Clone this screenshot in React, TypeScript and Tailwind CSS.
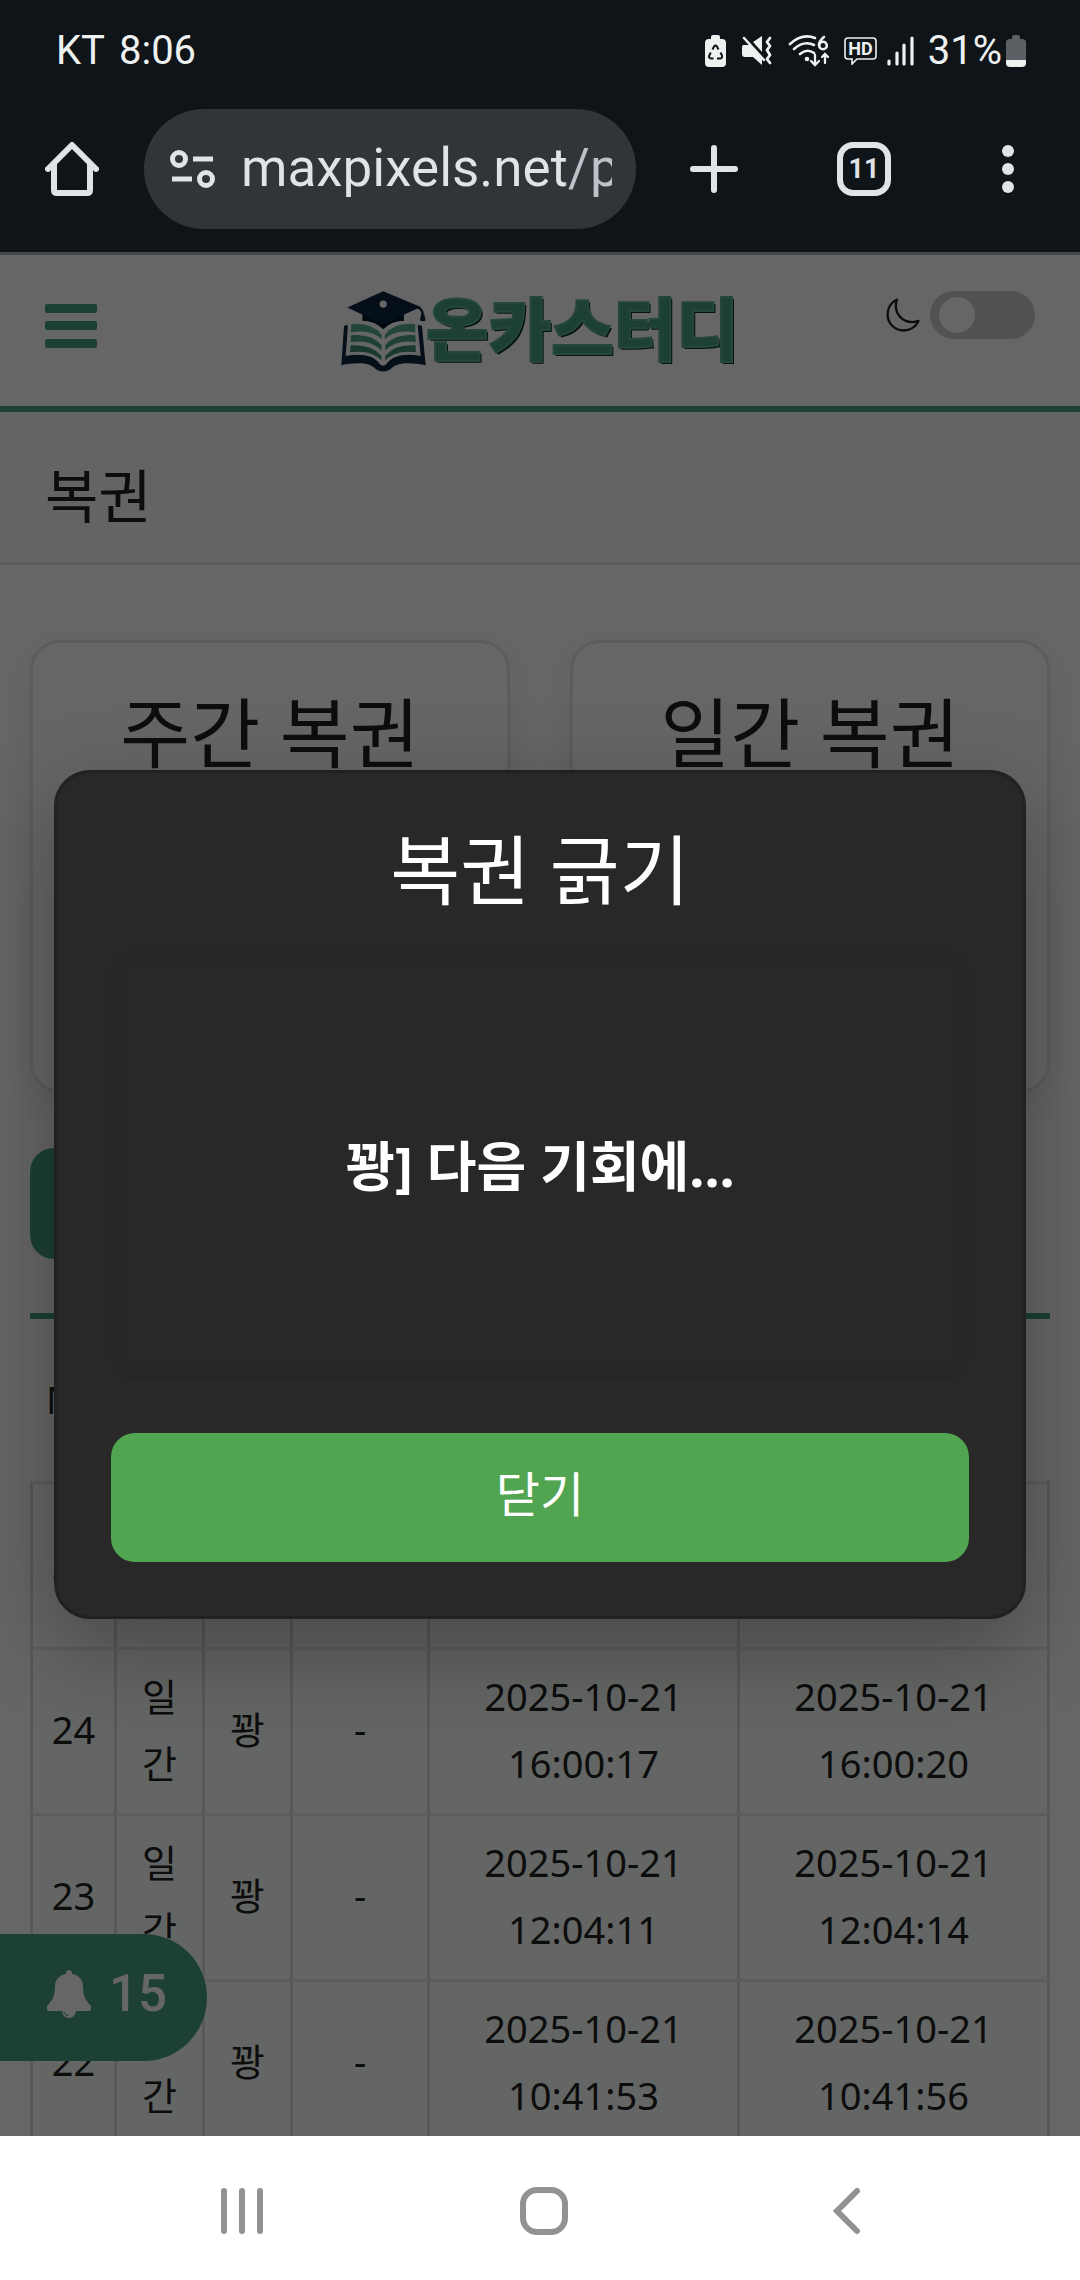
import { useState } from 'react'
import { IoMoonOutline } from 'react-icons/io5'

interface HistoryRow {
  no: number
  kind: string
  result: string
  prize: string
  boughtAt: string
  scratchedAt: string
}

const HISTORY: HistoryRow[] = [
  { no: 25, kind: '일간', result: '꽝', prize: '-', boughtAt: '', scratchedAt: '' },
  { no: 24, kind: '일간', result: '꽝', prize: '-', boughtAt: '2025-10-21 16:00:17', scratchedAt: '2025-10-21 16:00:20' },
  { no: 23, kind: '일간', result: '꽝', prize: '-', boughtAt: '2025-10-21 12:04:11', scratchedAt: '2025-10-21 12:04:14' },
  { no: 22, kind: '일간', result: '꽝', prize: '-', boughtAt: '2025-10-21 10:41:53', scratchedAt: '2025-10-21 10:41:56' },
]

function StatusBar() {
  return (
    <div className="flex h-[86px] items-center justify-between pt-4 pl-14 pr-[54px] font-[Roboto,sans-serif] text-[40px] leading-none text-[#edf1f0]">
      <div className="flex items-center gap-[14px]">
        <span>KT</span>
        <span>8:06</span>
      </div>
      <div className="flex items-center">
        {/* Battery protection */}
        <svg className="mr-4 h-8 w-[21px]" viewBox="0 0 21 32" fill="none">
          <path d="M6 2a2 2 0 0 1 2-2h5a2 2 0 0 1 2 2v2h2a4 4 0 0 1 4 4v20a4 4 0 0 1-4 4H4a4 4 0 0 1-4-4V8a4 4 0 0 1 4-4h2z" fill="currentColor" />
          <path d="M7.500 14.500 9 11.500q1.500-2 3 0l1.500 3M15.500 17.500l1.500 3q.5 3-2 3h-3M8.500 23.500H6q-3-.5-1.500-3.500l1.300-2.500" stroke="#0f1418" strokeWidth="2" />
        </svg>
        {/* Mute with vibration */}
        <svg className="mr-4 h-[30px] w-[30px]" viewBox="0 0 30 30" fill="none">
          <path d="M20 0v16l-9-10zM1 9h7l12 13v7l-9-8H3q-3 0-3-3v-6q0-3 1-3z" fill="currentColor" />
          <path d="m2 2 20 22" stroke="currentColor" strokeWidth="2.500" strokeLinecap="round" />
          <path d="m28 2-3 4 3 4-3 4 3 5-3 4 3 4" stroke="currentColor" strokeWidth="2.800" strokeLinecap="round" strokeLinejoin="round" />
        </svg>
        {/* Wi-Fi 6 with traffic arrows */}
        <svg className="mr-[14px] h-8 w-[42px]" viewBox="0 0 42 32" fill="none" stroke="currentColor" strokeWidth="2.600" strokeLinecap="round">
          <path d="M2 9Q14-2 27 3M6 14q10-9 20-4M12 19q7-6 14-1" />
          <circle cx="19" cy="24" r="1" fill="currentColor" />
          <path d="M36 2q-5 4-5 8" />
          <circle cx="35" cy="10.500" r="3.800" />
          <path d="M27 20v10m-4-4 4 4 4-4M37 28V19m-3 3 3-3 3 3" strokeWidth="2.300" />
        </svg>
        <svg className="mr-[10px] h-[28px] w-[33px]" viewBox="0 0 33 28" fill="none">
          <path d="M4 1h25q3 0 3 3v15q0 3-3 3H13l-5 5v-5H4q-3 0-3-3V4q0-3 3-3z" stroke="currentColor" strokeWidth="1.600" />
          <text x="16.500" y="18" textAnchor="middle" fontSize="18" fontWeight="700" fill="currentColor">HD</text>
        </svg>
        <svg className="mr-[14px] h-[30px] w-[27px]" viewBox="0 0 27 30" stroke="currentColor" strokeWidth="3.200" strokeLinecap="round">
          <path d="M2 25v3M10 17v11M17 9v19M25 2v26" />
        </svg>
        <span>31%</span>
        <svg className="ml-1 h-8 w-5" viewBox="0 0 20 32">
          <path d="M6 2a2 2 0 0 1 2-2h4a2 2 0 0 1 2 2v2h2a4 4 0 0 1 4 4v17H0V8a4 4 0 0 1 4-4h2z" fill="#5c6064" />
          <path d="M0 25h20v3a4 4 0 0 1-4 4H4a4 4 0 0 1-4-4z" fill="currentColor" />
        </svg>
      </div>
    </div>
  )
}

function BrowserBar() {
  return (
    <div className="flex h-[166px] items-center font-[Roboto,sans-serif] text-[#e1e3e5]">
      <button type="button" aria-label="홈" className="flex w-36 justify-center">
        <svg className="h-[54px] w-[54px]" viewBox="0 0 54 54" fill="none" stroke="currentColor" strokeWidth="6" strokeLinecap="round" strokeLinejoin="round">
          <path d="M3 27 27 3l24 24M9 22v26q0 3 3 3h30q3 0 3-3V22" />
        </svg>
      </button>

      <div className="flex h-[120px] min-w-0 flex-1 items-center rounded-full bg-[#313539] pl-[26px] pr-6">
        <svg className="h-10 w-[45px] shrink-0" viewBox="0 0 45 40" fill="none" stroke="currentColor" strokeWidth="5">
          <circle cx="9" cy="10" r="6.500" />
          <path d="M23 10h20M2 30h20" />
          <circle cx="36" cy="30" r="6.500" />
        </svg>
        <input
          type="text"
          aria-label="주소"
          defaultValue="maxpixels.net/p"
          className="ml-[26px] h-[72px] min-w-0 flex-1 bg-[linear-gradient(90deg,#e1e3e5_324px,#bdc2c8_324px)] bg-clip-text text-[53px] text-transparent outline-none"
        />
      </div>

      <button type="button" aria-label="새 탭" className="flex w-[156px] justify-center">
        <svg className="h-12 w-12" viewBox="0 0 48 48" stroke="currentColor" strokeWidth="6" strokeLinecap="round">
          <path d="M24 3v42M3 24h42" />
        </svg>
      </button>
      <button type="button" aria-label="탭 11개" className="flex w-36 justify-center">
        <span className="flex h-[54px] w-[54px] items-center justify-center rounded-2xl border-6 border-current text-[27px] font-bold leading-none">11</span>
      </button>
      <button type="button" aria-label="메뉴" className="flex w-36 justify-center">
        <svg className="h-12 w-3" viewBox="0 0 12 48" fill="currentColor">
          <circle cx="6" cy="6" r="6" />
          <circle cx="6" cy="24" r="6" />
          <circle cx="6" cy="42" r="6" />
        </svg>
      </button>
    </div>
  )
}

function BookLogo() {
  return (
    <svg className="h-[82px] w-[85px]" viewBox="33 63 256 246">
      <path d="M160 63 274 111l-52 23v18q-37 0-62 25-25-25-62-25v-18l-46-22z" fill="#0a2740" />
      <path d="M98 134l62 30 62-30v18q-37 0-62 25-25-25-62-25z" fill="#041828" />
      <circle cx="160" cy="102" r="11" fill="#fff" />
      <path d="M262 111q17 4 17 24" fill="none" stroke="#0a2740" strokeWidth="7" />
      <path d="M274 133h10l4 18q-8 5-17 0z" fill="#0a2740" />
      <path d="M42 169q3-5 12-3l-7 92c44-8 84-4 104 26q9 7 18 0c20-30 60-34 104-26l-9-92q9-2 13 3l11 117c-48-9-88-9-106 12q-22 14-44 0c-18-21-58-21-104-12z" fill="#0a2740" />
      <g fill="#5aac8e">
        <path d="M64 162q64-6 91 32v14q-30-32-93-21zM256 162q-64-6-91 32v14q30-32 92-21z" />
        <path d="M63 196q62-6 92 30v16q-32-34-93-26zM257 196q-62-6-91 30v16q32-34 92-26z" fill="#4ca084" />
        <path d="M62 226q64-4 93 32v14q-30-34-95-25zM257 226q-64-4-91 32v14q30-34 93-25z" fill="#409078" />
      </g>
    </svg>
  )
}

function SiteHeader() {
  const [dark, setDark] = useState(false)

  return (
    <header className="flex h-[157px] items-start border-b-6 border-[#48a082] px-[45px] pt-9">
      <div className="flex-1">
        <button type="button" aria-label="전체 메뉴" className="mt-[13px] block text-[#48a082]">
          <svg className="h-11 w-[52px]" viewBox="0 0 52 44" fill="currentColor">
            <rect y="0" width="52" height="9" rx="2" />
            <rect y="17" width="52" height="9" rx="2" />
            <rect y="35" width="52" height="9" rx="2" />
          </svg>
        </button>
      </div>

      <a href="#" className="flex items-start">
        <BookLogo />
        <span className="text-[68px] font-black leading-[76px] text-[#48a082] [-webkit-text-stroke:2px_#5fae9a] [text-shadow:2px_2px_0_#0a3020]">온카스터디</span>
      </a>

      <div className="flex flex-1 items-center justify-end gap-2">
        <IoMoonOutline className="h-[38px] w-[38px] text-[#222]" aria-hidden />
        <input
          type="checkbox"
          role="switch"
          aria-label="다크 모드"
          checked={dark}
          onChange={e => setDark(e.target.checked)}
          className="h-12 w-[105px] appearance-none rounded-full bg-[#ccc] p-[6px] pl-[9px] before:block before:h-9 before:w-9 before:rounded-full before:bg-white checked:before:ml-auto"
        />
      </div>
    </header>
  )
}

function LotteryCard({ title }: { title: string }) {
  return (
    <section className="min-h-[453px] rounded-[30px] border-3 border-[#e6e6e6] bg-white pt-[50px] shadow-[0_12px_36px_rgba(0,0,0,0.08)]">
      <h2 className="text-center text-[76px] leading-[80px]">{title}</h2>
    </section>
  )
}

function HistoryTable() {
  return (
    <table className="w-full table-fixed border-collapse border-3 border-[#ddd] text-center text-[38px] leading-[67px]">
      <colgroup>
        <col className="w-[84px]" />
        <col className="w-[88px]" />
        <col className="w-[88px]" />
        <col className="w-[137px]" />
        <col />
        <col />
      </colgroup>
      <tbody>
        {HISTORY.map((row, i) => (
          <tr key={row.no} className={i === 0 ? 'bg-white' : 'bg-[#f8fffa]'}>
            {[row.no, row.kind, row.result, row.prize, row.boughtAt, row.scratchedAt].map((cell, c) => (
              <td key={c} className="h-[166px] border-x-3 border-y-3 border-x-[#ddd] border-y-[#e8e8e8] px-4 pt-2 pb-3">{cell}</td>
            ))}
          </tr>
        ))}
      </tbody>
    </table>
  )
}

function ResultModal({ onClose }: { onClose: () => void }) {
  return (
    <div className="absolute inset-0 z-20 flex items-center justify-center bg-black/60 pb-[2px]">
      <div role="dialog" aria-modal="true" aria-labelledby="scratch-title" className="w-[90%] rounded-[36px] border-3 border-[#212121] bg-[#282828] p-[54px] text-center text-white shadow-[0_30px_90px_rgba(0,0,0,0.3)]">
        <h2 id="scratch-title" className="text-[76px] leading-[86px]">복권 긁기</h2>
        <div className="mt-[37px] flex h-[429px] items-center justify-center rounded-3xl pt-1 shadow-[inset_0_0_18px_rgba(0,0,0,0.08)]">
          <p className="text-[54px] font-bold">꽝] 다음 기회에...</p>
        </div>
        <button type="button" onClick={onClose} className="mt-[54px] h-[129px] w-full rounded-3xl bg-[#52a550] pb-2 text-[48px]">
          닫기
        </button>
      </div>
    </div>
  )
}

function SystemNav() {
  return (
    <nav className="grid h-36 shrink-0 grid-cols-3 items-center bg-white pt-[6px] pl-[91px] pr-[83px] text-[#929292]">
      <button type="button" aria-label="최근 앱" className="flex justify-center">
        <svg className="h-12 w-12" viewBox="0 0 48 48" stroke="currentColor" strokeWidth="6" strokeLinecap="round">
          <path d="M6 4v40M24 4v40M42 4v40" />
        </svg>
      </button>
      <button type="button" aria-label="홈 화면" className="flex justify-center">
        <svg className="h-12 w-12" viewBox="0 0 48 48" fill="none" stroke="currentColor" strokeWidth="6">
          <rect x="3" y="3" width="42" height="42" rx="14" />
        </svg>
      </button>
      <button type="button" aria-label="뒤로" className="flex justify-center">
        <svg className="h-12 w-12" viewBox="0 0 48 48" fill="none" stroke="currentColor" strokeWidth="6" strokeLinecap="round">
          <path d="M35 4 15 24l20 20" />
        </svg>
      </button>
    </nav>
  )
}

export default function App() {
  const [open, setOpen] = useState(true)

  return (
    <div className="flex h-screen flex-col overflow-hidden bg-white font-['Noto_Sans','Noto_Sans_CJK_KR',sans-serif] text-[#222]">
      <div className="shrink-0 border-b-3 border-[#41484a] bg-[#0f1418]">
        <StatusBar />
        <BrowserBar />
      </div>

      <div className="relative min-h-0 flex-1 overflow-hidden">
        <SiteHeader />
        <div className="h-[153px] border-b-3 border-[#e6e6e6] bg-[#fafafa] px-[45px] pt-11">
          <h1 className="text-[58px] leading-[80px]">복권</h1>
        </div>

        <main className="px-[30px] pt-[75px]">
          <div className="grid grid-cols-2 gap-[60px]">
            <LotteryCard title="주간 복권" />
            <LotteryCard title="일간 복권" />
          </div>
          <button type="button" aria-label="복권 구매" onClick={() => setOpen(true)} className="mt-[55px] block h-[111px] w-2/5 rounded-3xl bg-[#48a082]" />
          <div className="mt-[54px] border-t-6 border-[#48a082] px-4 pt-[47px] pb-12">
            <h3 className="text-[38px] leading-[67px]">My</h3>
          </div>
          <HistoryTable />
        </main>

        <button type="button" className="absolute bottom-[75px] left-0 flex h-[127px] w-[207px] items-center gap-[18px] rounded-r-full bg-[#48a082] pb-2 pl-[47px] font-[Roboto,sans-serif] text-[51px] font-medium leading-none text-white">
          <svg className="h-12 w-11" viewBox="0 0 44 48" fill="currentColor" aria-hidden>
            <path d="M22 0q3 0 3 4c7 1 11 6 11 12 0 9 2 14 8 20v3q0 2-2 2H29q-1 7-7 7t-7-7H2q-2 0-2-2v-3c6-6 8-11 8-20C8 10 12 5 19 4q0-4 3-4z" />
            <path d="M17 42q1 4 5 4" fill="none" stroke="#48a082" strokeWidth="1" />
          </svg>
          <span>15</span>
        </button>

        {open && <ResultModal onClose={() => setOpen(false)} />}
      </div>

      <SystemNav />
    </div>
  )
}
